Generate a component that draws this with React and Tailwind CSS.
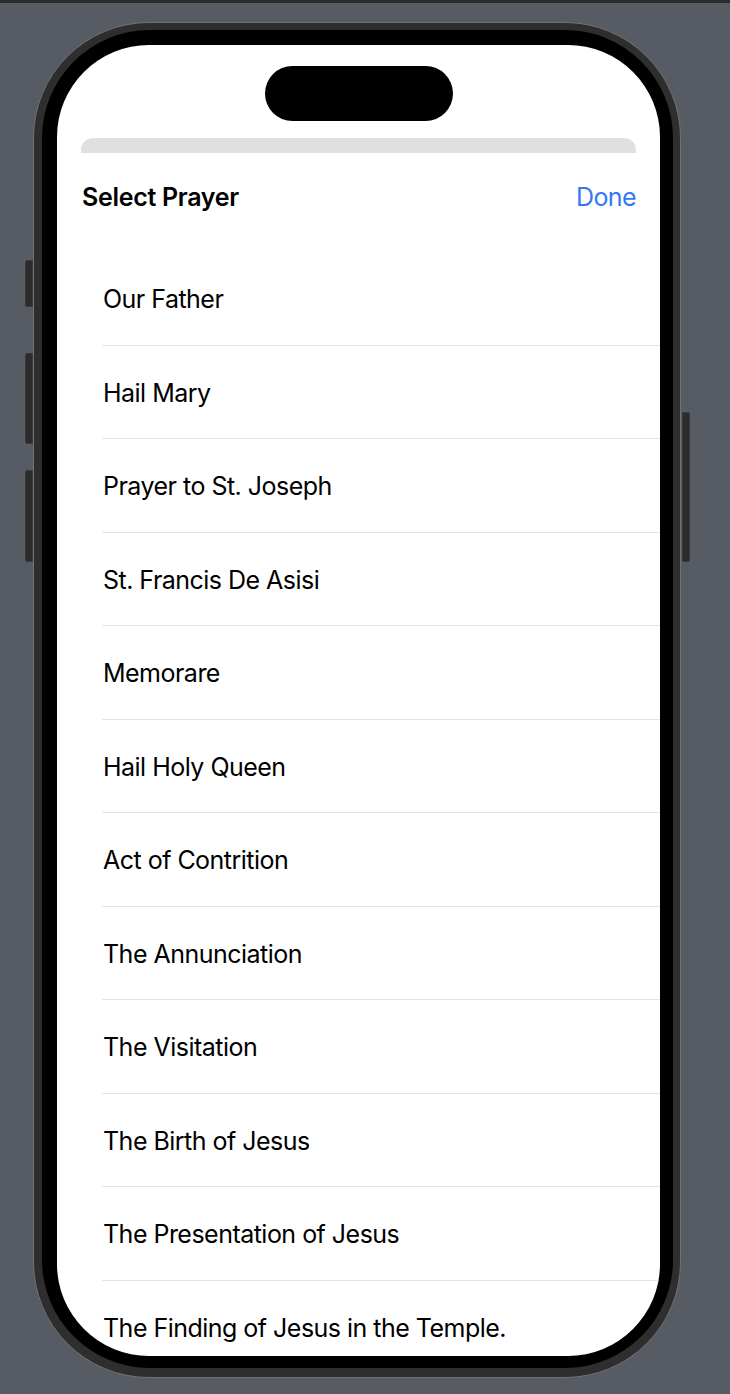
import React from 'react';

const prayers = [
  'Our Father',
  'Hail Mary',
  'Prayer to St. Joseph',
  'St. Francis De Asisi',
  'Memorare',
  'Hail Holy Queen',
  'Act of Contrition',
  'The Annunciation',
  'The Visitation',
  'The Birth of Jesus',
  'The Presentation of Jesus',
  'The Finding of Jesus in the Temple.',
];

// side hardware buttons of the phone frame
const SideButton = ({ className = '' }) => (
  <div className={`absolute w-[8px] bg-[#2c2c2c] border border-[#3a3a3a] ${className}`} />
);

const PrayerRow = ({ title }) => (
  <div className="h-[93.5px] ml-[45px] flex items-center border-b border-[#e4e4e4]">
    <span className="pl-[1px] pt-[3px] text-[25px] leading-none text-black tracking-[-0.52px]">{title}</span>
  </div>
);

export default function App() {
  return (
    <div
      className="w-[730px] h-[1394px] bg-[#575b63] overflow-hidden"
      style={{ fontFamily: 'Inter, "Noto Sans", sans-serif' }}
    >
      <div className="h-[3px] bg-[#2b2b2b]" />

      <div className="relative ml-[33px] mt-[19px] w-[648px]">
        <SideButton className="left-[-8px] top-[238px] h-[47px] rounded-l-[2px]" />
        <SideButton className="left-[-8px] top-[331px] h-[91px] rounded-l-[2px]" />
        <SideButton className="left-[-8px] top-[448px] h-[92px] rounded-l-[2px]" />
        <SideButton className="right-[-9px] top-[390px] h-[150px] rounded-r-[2px]" />

        <div className="rounded-[116px] bg-[#2e2e2e] border border-[#727272] pt-[7px] pb-[9px] pl-[8px] pr-[7px]">
          <div className="rounded-[108px] bg-black pt-[15px] pb-[12px] pl-[15px] pr-[13px]">
            <div className="h-[1311px] rounded-[92px] bg-white overflow-hidden">
              <div className="pt-[21px]">
                <div className="mx-auto w-[188px] h-[55px] rounded-full bg-black" />
              </div>

              <div className="mt-[17px] mx-[24px] h-[15px] rounded-t-[12px] bg-[#e0e0e0]" />

              <div className="h-[86px] pl-[25px] pr-[24px] pt-[2px] flex items-center justify-between">
                <span className="text-[25px] font-semibold leading-none text-black tracking-[-0.3px]">
                  Select Prayer
                </span>
                <span className="text-[25px] leading-none text-[#3478f6] tracking-[-0.6px]">Done</span>
              </div>

              <div className="pt-[13px]">
                {prayers.map((p) => (
                  <PrayerRow key={p} title={p} />
                ))}
              </div>
            </div>
          </div>
        </div>
      </div>
    </div>
  );
}
